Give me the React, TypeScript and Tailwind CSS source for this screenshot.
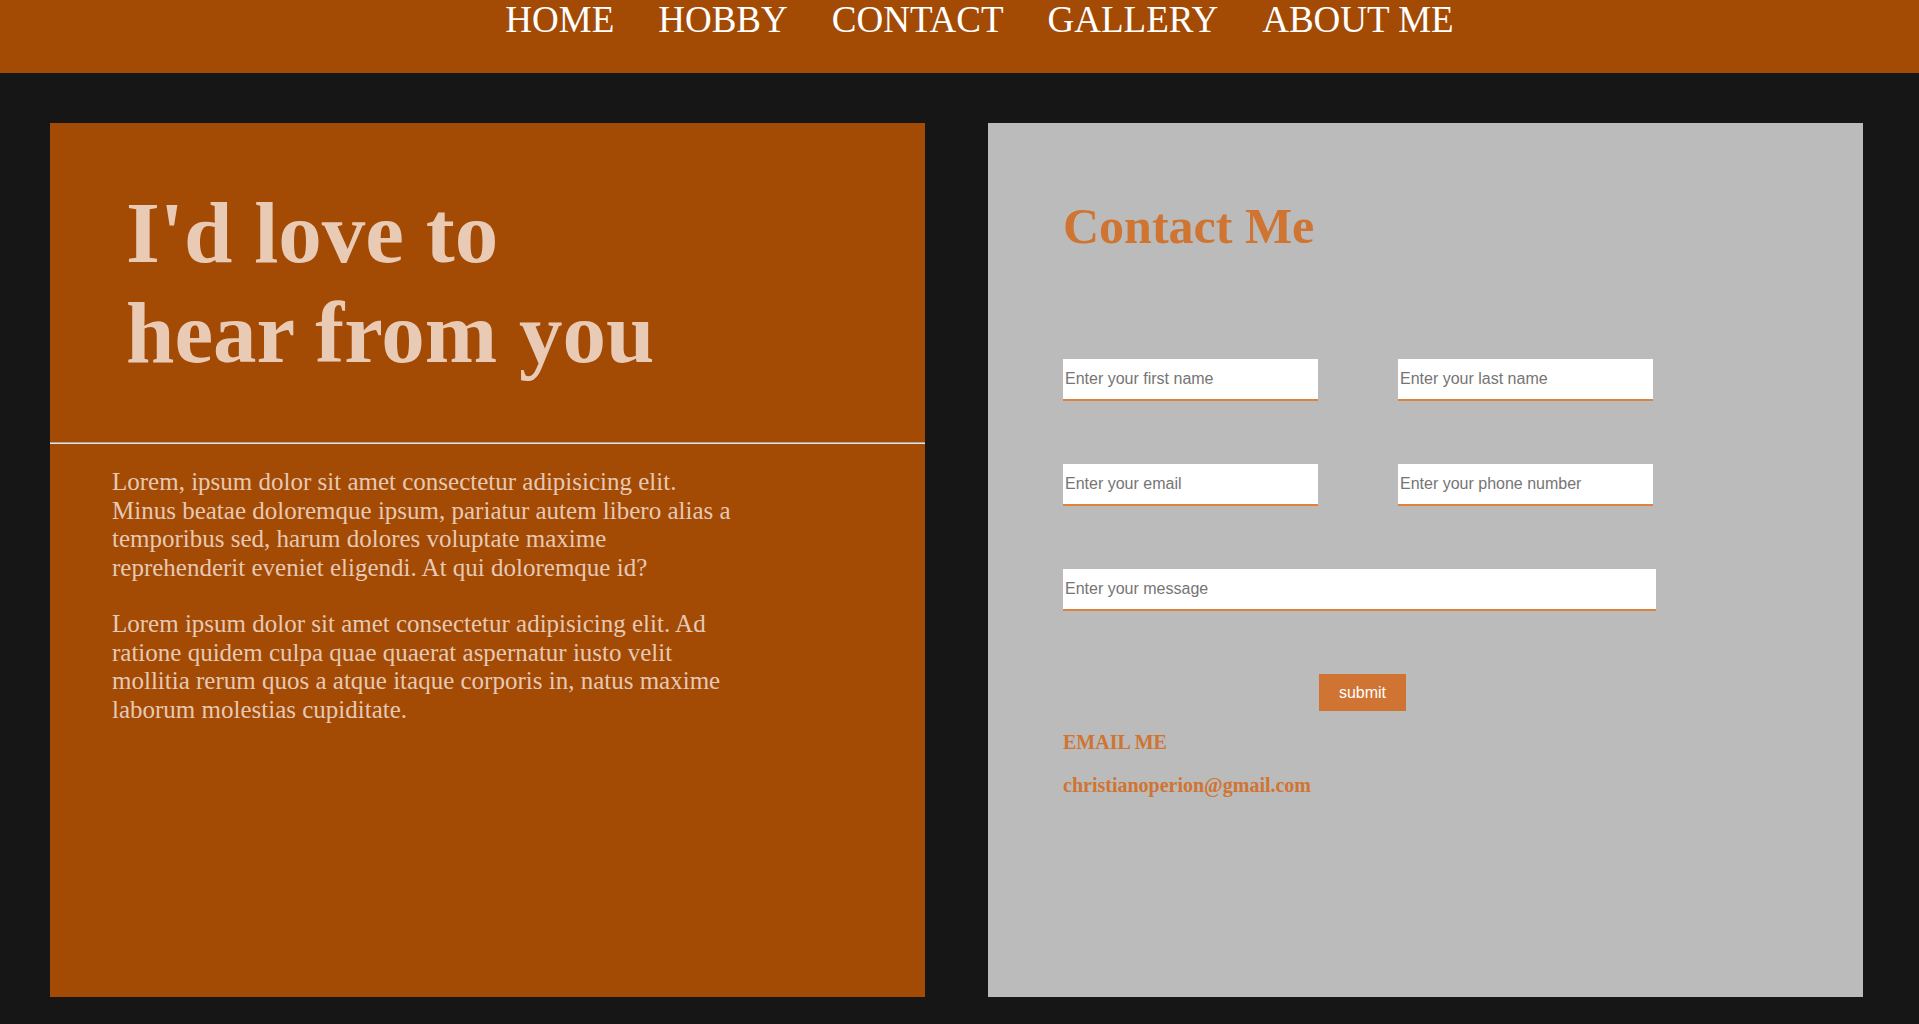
import { useState } from "react";

const links = ["HOME", "HOBBY", "CONTACT", "GALLERY", "ABOUT ME"];

const Field = ({ placeholder, wide }: { placeholder: string; wide?: boolean }) => {
  const [value, setValue] = useState("");
  return (
    <input
      type="text"
      value={value}
      onChange={(e) => setValue(e.target.value)}
      placeholder={placeholder}
      className={`${wide ? "w-[593px]" : "w-[255px]"} h-[42px] bg-white border-b-2 border-[#de8240] px-[2px] text-[16px] text-black placeholder:text-[#757575] font-['Liberation_Sans',Arial,sans-serif] outline-none`}
    />
  );
};

const App = () => {
  return (
    <div className="min-h-screen bg-[#161616] font-['Liberation_Serif','Times_New_Roman',serif]">
      <header className="h-[73px] bg-[#a34a05]">
        <ul className="flex justify-center pl-10 gap-[44px] text-[37px] leading-[40px] text-white">
          {links.map((l) => (
            <li key={l}>
              <a href="#" className="cursor-pointer">
                {l}
              </a>
            </li>
          ))}
        </ul>
      </header>

      <main className="flex gap-[63px] px-[50px] pt-[50px] pb-[26px]">
        <section className="w-[875px] h-[874px] bg-[#a34a05]">
          <h1 className="pt-[60px] pl-[76px] text-[87px] leading-[100px] font-bold text-[#e8cab5]">
            I'd love to
            <br />
            hear from you
          </h1>
          <div className="mt-[59px] border-t border-b border-t-[#a9a9a9] border-b-[#e4e4e4]" />
          <div className="mt-[24px] ml-[62px] w-[626px] text-[25px] leading-[28.5px] text-[#e6c9b4]">
            <p>
              Lorem, ipsum dolor sit amet consectetur adipisicing elit. Minus beatae doloremque
              ipsum, pariatur autem libero alias a temporibus sed, harum dolores voluptate maxime
              reprehenderit eveniet eligendi. At qui doloremque id?
            </p>
            <p className="mt-[28px]">
              Lorem ipsum dolor sit amet consectetur adipisicing elit. Ad ratione quidem culpa quae
              quaerat aspernatur iusto velit mollitia rerum quos a atque itaque corporis in, natus
              maxime laborum molestias cupiditate.
            </p>
          </div>
        </section>

        <section className="w-[875px] h-[874px] bg-[#bbbbbb]">
          <h2 className="pt-[75px] pl-[75px] text-[50px] leading-[57px] font-bold text-[#d07432]">
            Contact Me
          </h2>
          <form className="ml-[75px] mt-[104px] flex flex-col items-start" onSubmit={(e) => e.preventDefault()}>
            <div className="flex gap-[80px]">
              <Field placeholder="Enter your first name" />
              <Field placeholder="Enter your last name" />
            </div>
            <div className="flex gap-[80px] mt-[63px]">
              <Field placeholder="Enter your email" />
              <Field placeholder="Enter your phone number" />
            </div>
            <div className="mt-[63px]">
              <Field placeholder="Enter your message" wide />
            </div>
            <button
              type="submit"
              className="mt-[63px] ml-[256px] w-[87px] h-[37px] bg-[#cf7432] text-white text-[16px] font-['Liberation_Sans',Arial,sans-serif] cursor-pointer"
            >
              submit
            </button>
          </form>
          <div className="ml-[75px] text-[20px] leading-[23px] font-bold text-[#d07432]">
            <h4 className="mt-[20px]">EMAIL ME</h4>
            <p className="mt-[20px]">christianoperion@gmail.com</p>
          </div>
        </section>
      </main>
    </div>
  );
};

export default App;
